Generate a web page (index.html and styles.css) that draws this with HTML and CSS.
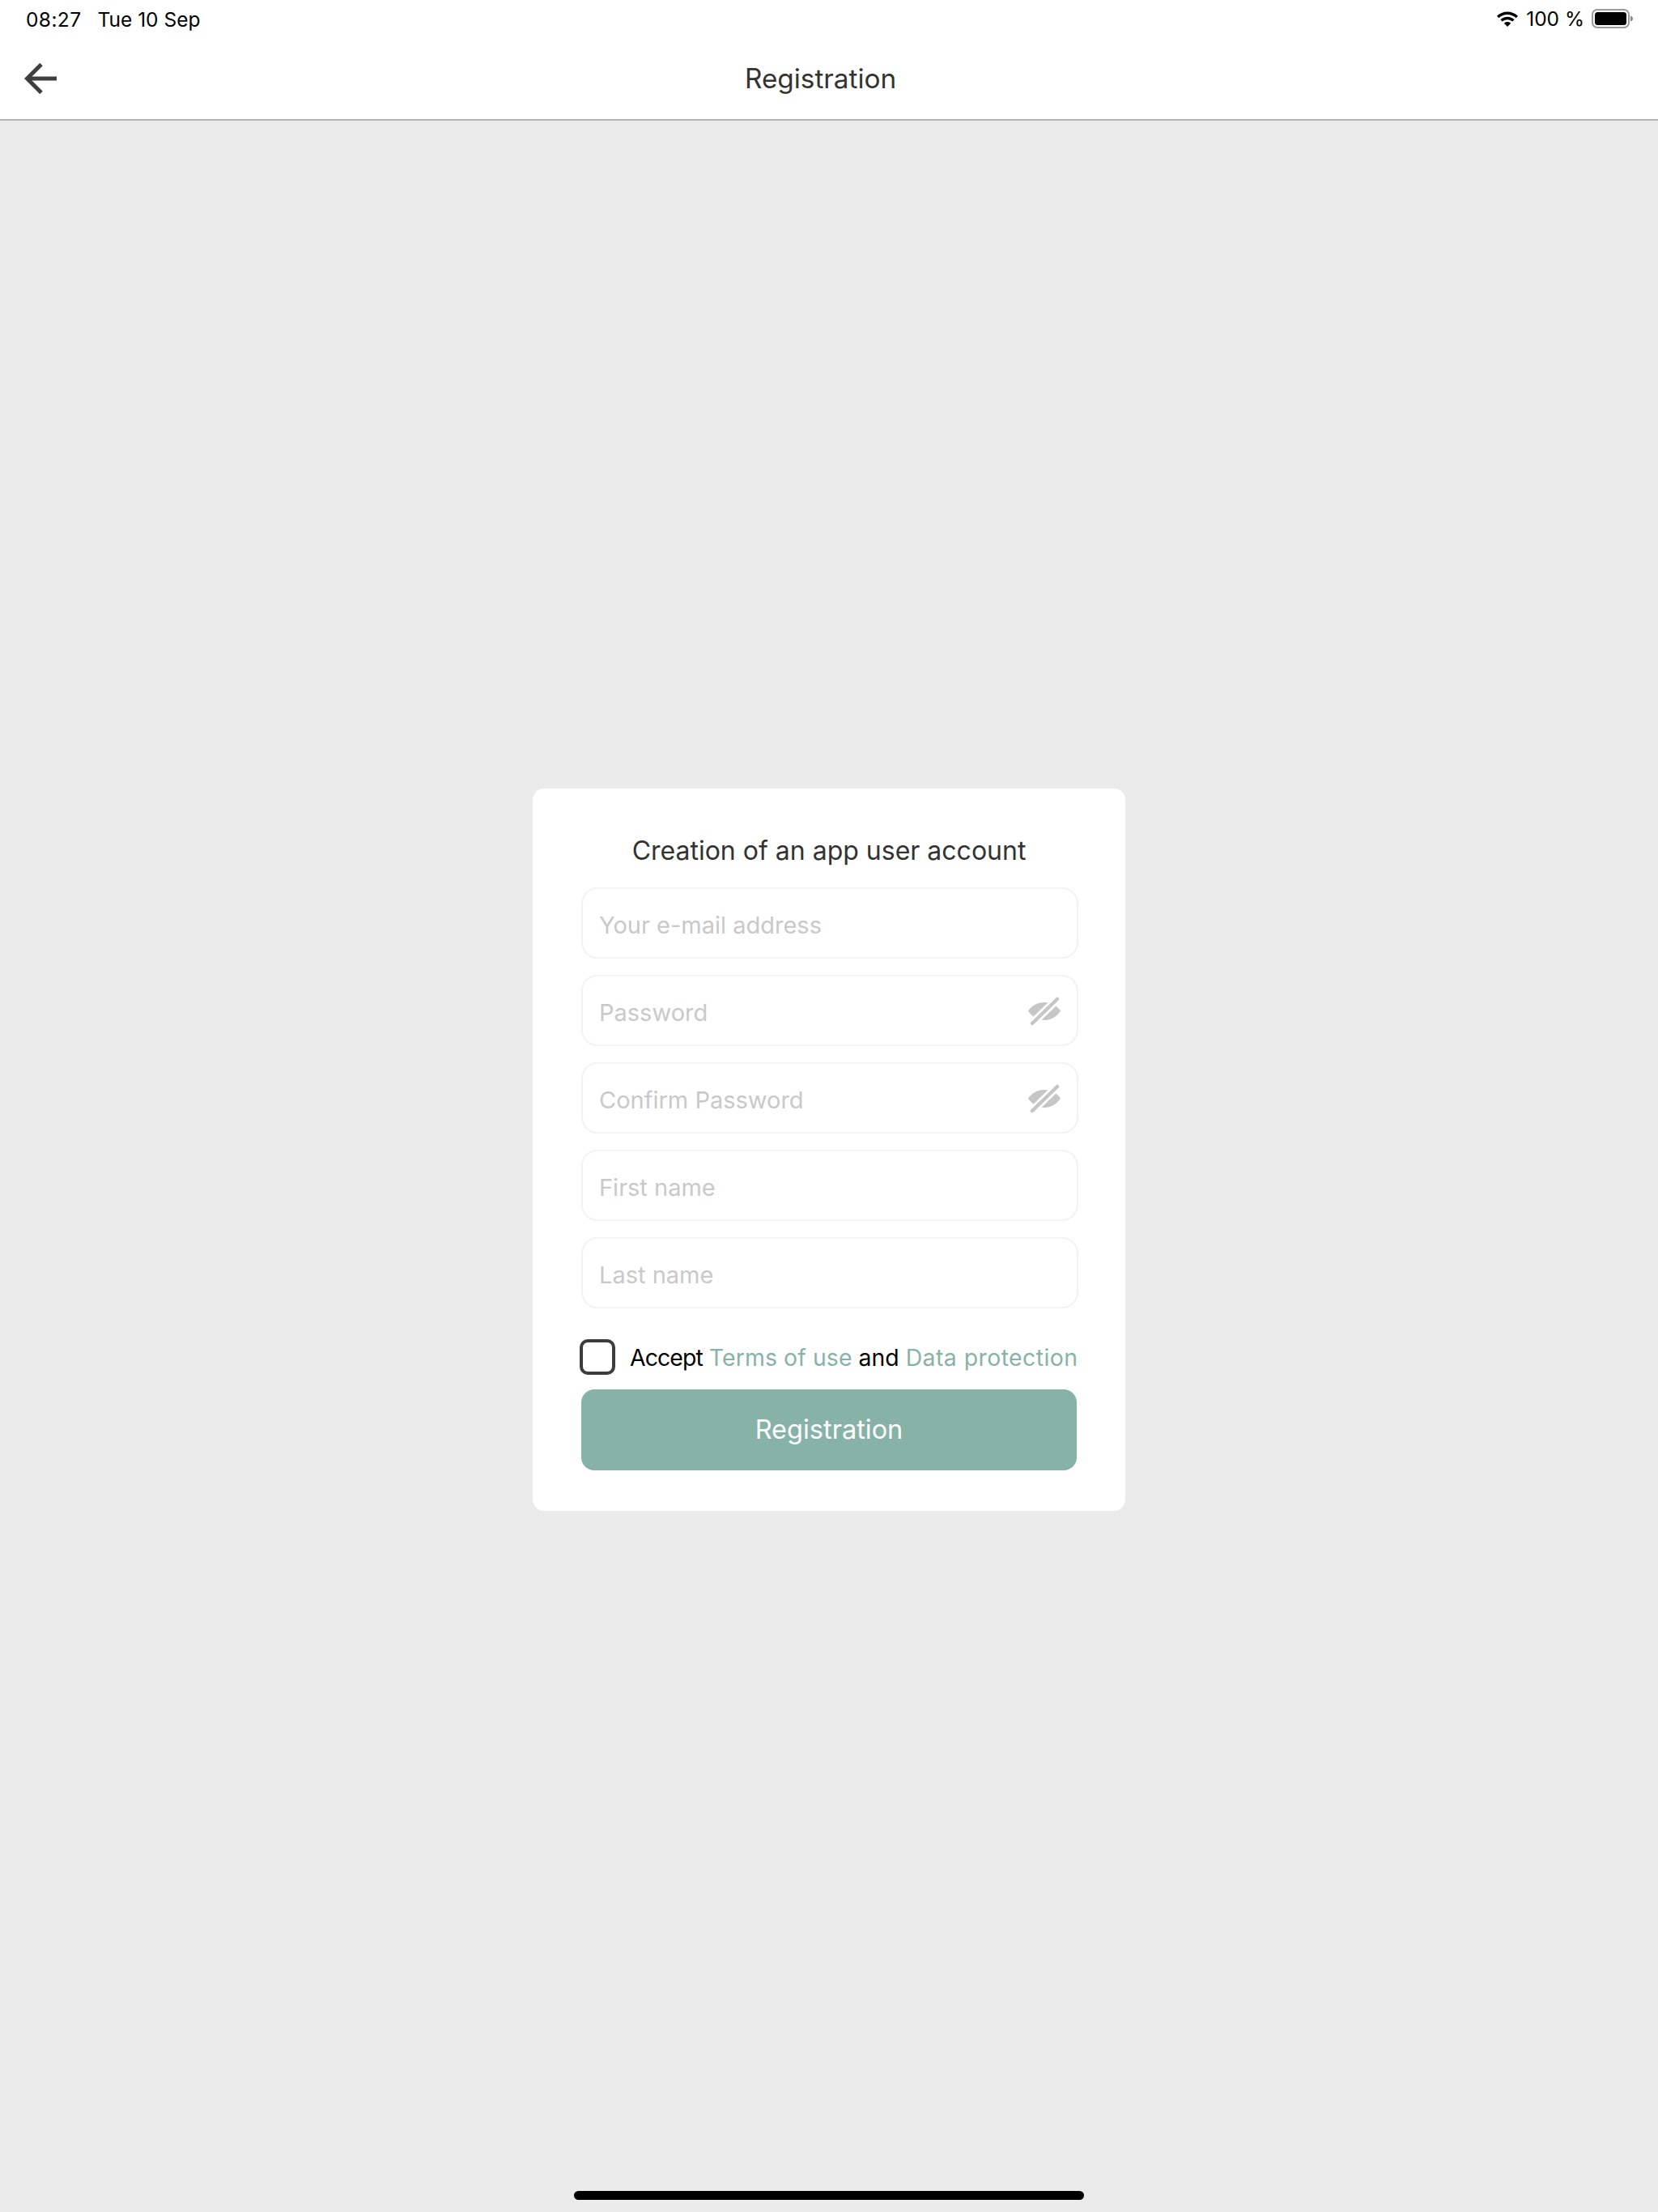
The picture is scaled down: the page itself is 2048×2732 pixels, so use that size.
FILE: index.html
```html
<!DOCTYPE html>
<html lang="en">
<head>
<meta charset="utf-8">
<title>Registration</title>
<link rel="stylesheet" href="styles.css">
</head>
<body>
<div class="screen">
  <header class="top">
    <div class="status">
      <div class="status-left"><span class="time">08:27</span><span>Tue 10 Sep</span></div>
      <div class="status-right">
        <svg class="wifi" viewBox="0 0 28 20" width="28" height="20"><path d="M14 1.500c-5 0-9.600 2-13 5.300l2.300 2.400C6 6.500 9.800 4.900 14 4.900s8 1.600 10.700 4.300L27 6.800C23.600 3.500 19 1.500 14 1.500z"/><path d="M14 7.800c-3.300 0-6.300 1.300-8.600 3.400l2.300 2.400c1.600-1.500 3.900-2.400 6.300-2.400s4.700.9 6.300 2.400l2.300-2.400c-2.300-2.100-5.300-3.400-8.600-3.400z"/><path d="M14 14.100c-1.700 0-3.100.6-4.200 1.600l4.200 4.300 4.200-4.300c-1.100-1-2.500-1.600-4.200-1.600z"/></svg>
        <span class="pct">100 %</span>
        <svg class="battery" viewBox="0 0 52 24" width="52" height="24"><rect x="1" y="1" width="45" height="22" rx="6" fill="none" stroke="#9a9a9a" stroke-width="2"/><rect x="4" y="4" width="39" height="16" rx="3.500" fill="#000"/><path d="M48 8.500c1.800.5 3 1.800 3 3.500s-1.200 3-3 3.500z" fill="#8c8c8c"/></svg>
      </div>
    </div>
    <div class="nav">
      <svg class="back" viewBox="0 0 40 40" width="40" height="40"><path d="M40 20H4M21 2.500 3.500 20 21 37.500" fill="none" stroke="#3f3f3f" stroke-width="5"/></svg>
      <div class="nav-title">Registration</div>
    </div>
  </header>
  <main class="body">
    <section class="card">
      <h1 class="card-title">Creation of an app user account</h1>
      <div class="fields">
        <div class="field"><span class="ph">Your e-mail address</span></div>
        <div class="field"><span class="ph">Password</span>
          <svg class="eye" viewBox="0 0 40 36" width="40" height="36"><path class="eye-fill" d="M0 17.500C5 10.500 12 7 20 7s15 3.500 20 10.500C35 25 28 29 20 29S5 25 0 17.500z"/><path class="eye-gap" d="M36 3 5 33"/><path class="eye-slash" d="M36 3 5 33"/></svg>
        </div>
        <div class="field"><span class="ph">Confirm Password</span>
          <svg class="eye" viewBox="0 0 40 36" width="40" height="36"><path class="eye-fill" d="M0 17.500C5 10.500 12 7 20 7s15 3.500 20 10.500C35 25 28 29 20 29S5 25 0 17.500z"/><path class="eye-gap" d="M36 3 5 33"/><path class="eye-slash" d="M36 3 5 33"/></svg>
        </div>
        <div class="field"><span class="ph">First name</span></div>
        <div class="field"><span class="ph">Last name</span></div>
      </div>
      <div class="accept">
        <span class="check"></span>
        <span class="accept-text"><span class="lead">Accept</span> <span class="link">Terms of use</span> and <span class="link link-wide">Data protection</span></span>
      </div>
      <div class="submit">Registration</div>
    </section>
  </main>
  <div class="home-bar"></div>
</div>
</body>
</html>
```
FILE: styles.css
```css
* { box-sizing: border-box; }
html, body { margin: 0; padding: 0; }
body { font-family: Inter, "Liberation Sans", sans-serif; background: #ebebeb; }
.screen { position: relative; width: 2048px; height: 2732px; display: flex; flex-direction: column; }
.top { background: #fff; height: 149px; border-bottom: 2px solid #b5b5b5; flex: none; }
.status { height: 48px; padding: 0 30px 0 32px; display: flex; justify-content: space-between; align-items: center; font-size: 24.500px; color: #000; }
.status-left { display: flex; gap: 20px; margin-top: -1px; }
.time { letter-spacing: 0.4px; }
.status-right { display: flex; align-items: center; margin-top: -3px; }
.wifi { fill: #000; margin-right: 9px; }
.pct { margin-right: 9px; }
.nav { position: relative; height: 99px; display: flex; align-items: center; padding-left: 30px; }
.back { flex: none; margin-top: -2px; }
.nav-title { position: absolute; left: 920px; top: 27px; font-size: 33.300px; line-height: 44px; color: #333; }
.body { flex: 1; display: flex; align-items: center; justify-content: center; padding-bottom: 41px; }
.card { width: 732px; height: 892px; background: #fff; border-radius: 14px; padding: 56px 60px 50px; }
.card-title { margin: 0 0 24px; font-size: 32px; font-weight: 400; line-height: 42px; color: #333; text-align: center; }
.fields { display: flex; flex-direction: column; gap: 20px; margin-right: -2px; }
.field { height: 88px; border: 2px solid #f3f3f3; border-radius: 20px; padding: 4px 20px 0 20px; display: flex; align-items: center; justify-content: space-between; }
.ph { font-size: 29px; color: #c9c9c9; }
.eye { flex: none; margin-top: -3px; }
.eye-fill { fill: #c6c6c6; }
.eye-gap { stroke: #fff; stroke-width: 10; fill: none; }
.eye-slash { stroke: #c6c6c6; stroke-width: 4.500; stroke-linecap: round; fill: none; }
.accept { display: flex; align-items: center; margin: 38px 0 18px -2px; height: 44px; gap: 18px; }
.check { width: 44px; height: 44px; border: 4px solid #3d3d3d; border-radius: 10px; flex: none; }
.accept-text { font-size: 28.400px; color: #000; white-space: nowrap; padding-top: 1px; }
.lead { letter-spacing: -0.900px; }
.link { color: #87b3a7; letter-spacing: 0.100px; }
.link-wide { letter-spacing: 0.450px; }
.submit { height: 100px; background: #87b3a7; border-radius: 16px; color: #fff; font-size: 32.500px; display: flex; align-items: center; justify-content: center; padding-bottom: 1px; }
.home-bar { position: absolute; left: 709px; top: 2706px; width: 630px; height: 11px; background: #000; border-radius: 6px; }
```
